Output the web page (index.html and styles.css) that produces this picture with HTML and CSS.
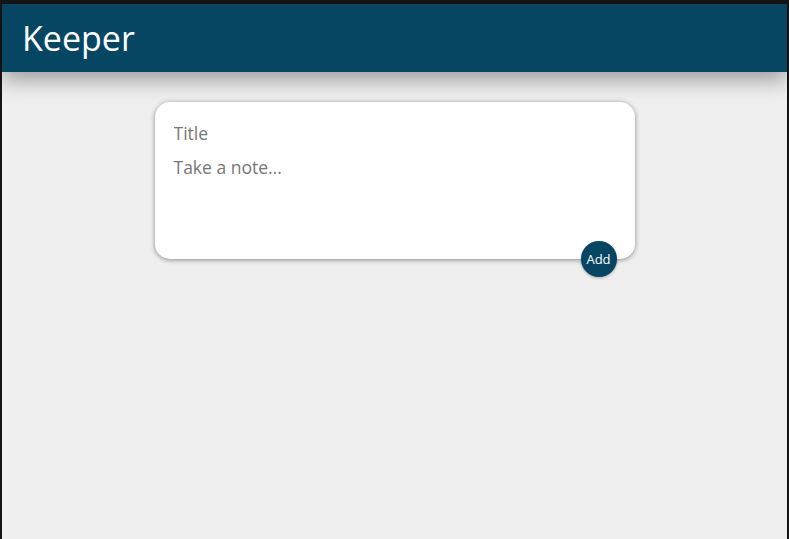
FILE: index.html
```html
<!DOCTYPE html>
<html>
<head>
<meta charset="utf-8">
<link rel="stylesheet" href="styles.css">
</head>
<body>
<div class="app">
  <header class="header"><h1 class="brand">Keeper</h1></header>
  <main class="main">
    <form class="create-note">
      <input class="field title" name="title" placeholder="Title">
      <textarea class="field content" name="content" placeholder="Take a note..." rows="3"></textarea>
      <button class="add" type="button">Add</button>
    </form>
  </main>
</div>
</body>
</html>
```
FILE: styles.css
```css
html, body { margin: 0; padding: 0; height: 100%; }
body {
  background: #151515;
  font-family: "Open Sans", "Noto Sans", sans-serif;
}
.app {
  margin: 4px 2px 0 2px;
  height: calc(100% - 4px);
  background: #efefef;
  display: flex;
  flex-direction: column;
}
.header {
  background: #064663;
  height: 68px;
  padding: 0 20px;
  display: flex;
  align-items: center;
  box-shadow: 0 8px 20px rgba(0, 0, 0, 0.35);
  position: relative;
  z-index: 1;
}
.brand {
  margin: 0;
  color: #fff;
  font-size: 34px;
  font-weight: 400;
  line-height: 1;
}
.main { padding-top: 30px; }
.create-note {
  position: relative;
  width: 480px;
  box-sizing: border-box;
  margin: 0 auto;
  background: #fff;
  padding: 15px;
  border-radius: 15px;
  box-shadow: 0 1px 5px rgb(138, 137, 137);
  display: flex;
  flex-direction: column;
}
.field {
  border: none;
  outline: none;
  padding: 4px;
  font-family: inherit;
  font-size: 17.5px;
  color: #333;
  resize: none;
  width: 100%;
  box-sizing: border-box;
  background: transparent;
}
.field::placeholder { color: #777; }
.title { height: 34px; padding: 3px 4px 5px; }
.content { height: 93px; }
.add {
  position: absolute;
  right: 18px;
  bottom: -18px;
  width: 36px;
  height: 36px;
  border: none;
  border-radius: 50%;
  background: #064663;
  color: #fff;
  font-family: inherit;
  font-size: 13px;
  padding: 0;
  box-shadow: 0 1px 3px rgba(0, 0, 0, 0.3);
}
```
